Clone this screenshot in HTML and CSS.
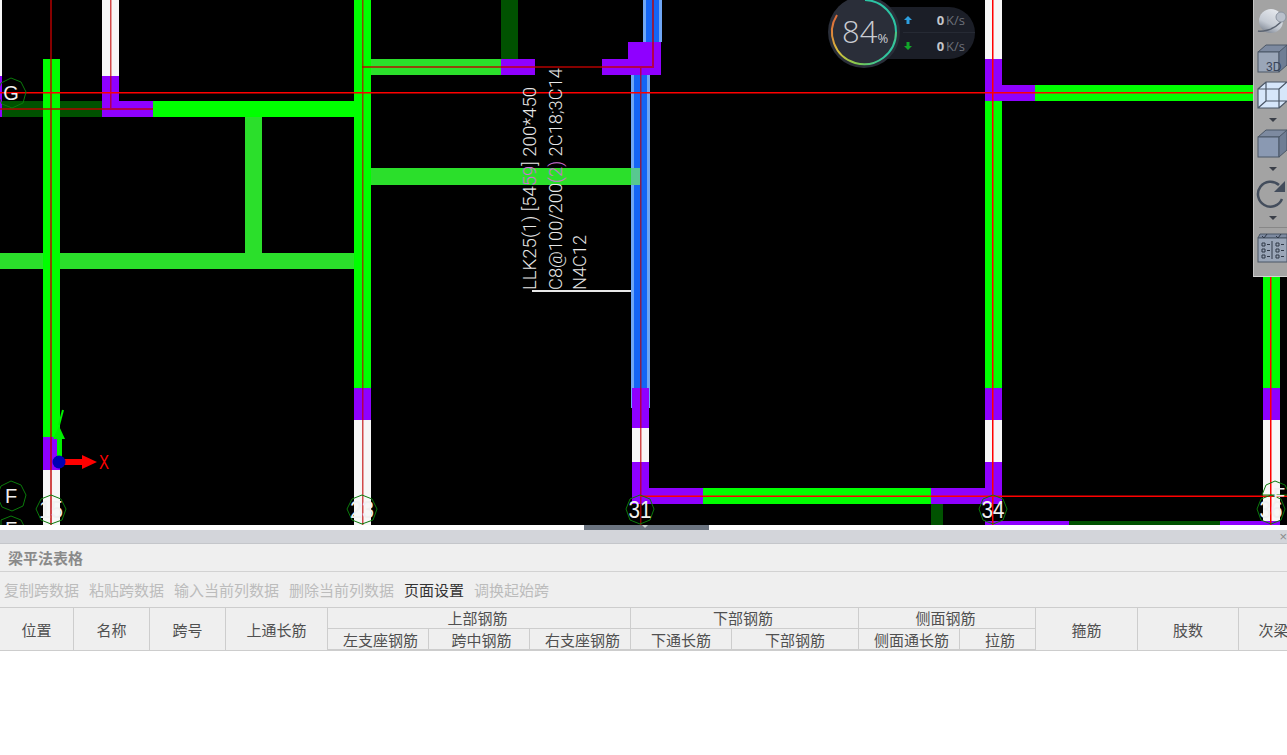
FILE: index.html
```html
<!DOCTYPE html>
<html lang="en">
<head>
  <meta charset="UTF-8">
  <title>梁平法表格</title>
  <link rel="stylesheet" href="styles.css">
</head>
<body>

  <div class="viewport">
    <!-- drawing area, everything inside is model coordinates -->
    <svg class="drawing" width="1287" height="525" viewBox="0 0 1287 525">
      <g class="white">
        <rect x="0" y="0" width="2" height="76"/>
        <rect x="102" y="0" width="17" height="76"/>
        <rect x="43" y="470" width="17" height="55"/>
        <rect x="354" y="420" width="17" height="105"/>
        <rect x="632" y="428" width="17" height="34"/>
        <rect x="985" y="0" width="17" height="59"/>
        <rect x="985" y="420" width="17" height="42"/>
        <rect x="1263" y="420" width="17" height="105"/>
      </g>
      <g class="dark-green">
        <rect x="2" y="101" width="100" height="16"/>
        <rect x="501" y="0" width="17" height="59"/>
        <rect x="931" y="504" width="12" height="21"/>
        <rect x="1069" y="521" width="151" height="4"/>
      </g>
      <g class="soft-green">
        <rect x="245" y="117" width="17" height="136"/>
        <rect x="0" y="253" width="354" height="16"/>
        <rect x="371" y="168" width="269" height="17"/>
        <rect x="364" y="59" width="137" height="16"/>
      </g>
      <g class="blue">
        <rect class="blue-edge" x="643" y="0" width="19" height="42"/>
        <rect x="646" y="0" width="13" height="42"/>
        <rect class="blue-edge" x="631" y="75" width="19" height="333"/>
        <rect x="634" y="75" width="13" height="333"/>
      </g>
      <rect class="beam-over-blue" x="631" y="168" width="9" height="17"/>
      <g class="green">
        <rect x="43" y="59" width="17" height="378"/>
        <rect x="153" y="101" width="201" height="16"/>
        <rect x="354" y="0" width="17" height="388"/>
        <rect x="703" y="488" width="228" height="16"/>
        <rect x="985" y="101" width="17" height="287"/>
        <rect x="1035" y="85" width="218" height="16"/>
        <rect x="1263" y="277" width="17" height="111"/>
      </g>
      <g class="purple">
        <rect x="0" y="76" width="2" height="41"/>
        <rect x="43" y="437" width="17" height="33"/>
        <rect x="102" y="76" width="17" height="41"/>
        <rect x="119" y="101" width="34" height="16"/>
        <rect x="354" y="388" width="17" height="32"/>
        <rect x="501" y="59" width="34" height="16"/>
        <rect x="602" y="59" width="59" height="16"/>
        <rect x="628" y="42" width="33" height="17"/>
        <rect x="632" y="388" width="17" height="40"/>
        <rect x="632" y="462" width="17" height="42"/>
        <rect x="649" y="488" width="54" height="16"/>
        <rect x="931" y="488" width="71" height="16"/>
        <rect x="985" y="59" width="17" height="42"/>
        <rect x="1002" y="85" width="33" height="16"/>
        <rect x="985" y="388" width="17" height="32"/>
        <rect x="985" y="462" width="17" height="42"/>
        <rect x="985" y="521" width="84" height="4"/>
        <rect x="1263" y="388" width="17" height="32"/>
        <rect x="1220" y="521" width="60" height="4"/>
      </g>

      <!-- axis lines -->
      <g class="axis-dim">
        <rect x="50" y="0" width="2" height="525"/>
        <rect x="0" y="108" width="153" height="2"/>
        <rect x="110" y="0" width="1.5" height="108"/>
        <rect x="362" y="66" width="292" height="2"/>
        <rect x="652" y="0" width="2" height="66"/>
        <rect x="640" y="68" width="1.5" height="457"/>
        <rect x="362" y="0" width="1.5" height="525"/>
      </g>
      <g class="axis">
        <rect x="0" y="92" width="1253" height="1.5"/>
        <rect x="640" y="495.500" width="647" height="1.5"/>
        <rect x="992" y="0" width="1.5" height="525"/>
        <rect x="1270" y="277" width="1.5" height="248"/>
      </g>

      <!-- axis bubbles -->
      <g class="bubble">
        <polygon points="11,78 21,82 26,92 23,103 12,108 2,104 -3,93 1,83"/>
        <polygon points="11,481 21,485 26,495 23,506 12,511 2,507 -3,496 1,486"/>
        <polygon points="11,516 21,520 26,530 1,530 1,520"/>
        <polygon points="51,495 61,499 66,509 62,520 51,524 41,520 36,509 41,499"/>
        <polygon points="362,495 372,499 377,509 373,520 362,524 352,520 347,509 352,499"/>
        <polygon points="640,495 650,499 654,509 650,520 640,524 630,520 626,509 630,499"/>
        <polygon points="993,495 1003,499 1007,509 1003,520 993,524 983,520 979,509 983,499"/>
        <polygon points="1271,495 1281,499 1285,509 1281,520 1271,524 1261,520 1257,509 1261,499"/>
        <polygon points="1275,481 1285,485 1290,495 1262,495 1266,485"/>
      </g>
      <g class="bubble-text">
        <text x="11" y="100">G</text>
        <text x="11" y="503">F</text>
        <text x="11" y="536">F</text>
        <text class="num" x="51" y="518" textLength="24" lengthAdjust="spacingAndGlyphs">15</text>
        <text class="num" x="362" y="518" textLength="24" lengthAdjust="spacingAndGlyphs">23</text>
        <text class="num" x="640" y="518" textLength="23" lengthAdjust="spacingAndGlyphs">31</text>
        <text class="num" x="993" y="518" textLength="23" lengthAdjust="spacingAndGlyphs">34</text>
        <text class="num" x="1271" y="518" textLength="23" lengthAdjust="spacingAndGlyphs">36</text>
        <text x="1279" y="502">F</text>
      </g>

      <!-- beam annotation -->
      <rect class="leader" x="532" y="290" width="99" height="2"/>
      <g class="note">
        <text transform="translate(536 290) rotate(-90)" textLength="203" lengthAdjust="spacingAndGlyphs">LLK25(1) [54<tspan class="note-xor">59</tspan>] 200*450</text>
        <text transform="translate(562 290) rotate(-90)" textLength="222" lengthAdjust="spacingAndGlyphs">C8@100/200<tspan class="note-xor">(2)</tspan> 2C18;3C14</text>
        <text transform="translate(586 290) rotate(-90)" textLength="55" lengthAdjust="spacingAndGlyphs">N4C12</text>
      </g>

      <!-- UCS icon -->
      <rect class="ucs-y" x="57" y="438" width="5" height="24"/>
      <path class="ucs-y" d="M59 426l6 13h-12z"/>
      <path class="ucs-y-letter" d="M63 410l-4 15"/>
      <rect class="ucs-x" x="64" y="459" width="19" height="6"/>
      <path class="ucs-x" d="M97 462l-15-7v14z"/>
      <circle class="ucs-dot" cx="59" cy="462" r="6.5"/>
      <text class="ucs-letter" x="99" y="469" textLength="10" lengthAdjust="spacingAndGlyphs">X</text>
    </svg>

    <!-- network speed widget -->
    <div class="speed">
      <div class="speed-pill">
        <div class="speed-row">
          <svg class="speed-arrow" width="10" height="10" viewBox="0 0 10 10"><path class="up" d="M5 1l4 4H6.500v4h-3V5H1z"/></svg>
          <b>0</b><span>K/s</span>
        </div>
        <div class="speed-row">
          <svg class="speed-arrow" width="10" height="10" viewBox="0 0 10 10"><path class="down" d="M5 9l4-4H6.500V1h-3v4H1z"/></svg>
          <b>0</b><span>K/s</span>
        </div>
      </div>
      <div class="speed-dial">
        <svg width="74" height="74" viewBox="0 0 74 74">
          <defs>
            <linearGradient id="ring" x1="0" y1="0" x2="1" y2="0.6">
              <stop offset="0" stop-color="#e0603a"/>
              <stop offset="0.4" stop-color="#d8c23c"/>
              <stop offset="0.75" stop-color="#7cc850"/>
              <stop offset="1" stop-color="#2cc4a4"/>
            </linearGradient>
          </defs>
          <circle cx="37" cy="37" r="36" fill="#2a2e39"/>
          <path class="ring-a" d="M10 20A32 32 0 1 0 69 37"/>
          <path class="ring-b" d="M69 37A32 32 0 0 0 38 5"/>
        </svg>
        <div class="speed-value">84<small>%</small></div>
      </div>
    </div>

    <!-- view toolbar -->
    <div class="view-bar">
      <svg width="34" height="277" viewBox="0 0 34 277">
        <defs>
          <linearGradient id="ball" x1="0.7" y1="0" x2="0.2" y2="1">
            <stop offset="0" stop-color="#e6e9ee"/>
            <stop offset="0.6" stop-color="#c4cad3"/>
            <stop offset="1" stop-color="#79818e"/>
          </linearGradient>
        </defs>
        <!-- orbit -->
        <circle cx="18" cy="21" r="12" fill="url(#ball)"/>
        <path class="i-orbit" d="M5 31q3 1 10-1t13-8"/>
        <circle class="i-ball" cx="28" cy="17" r="5"/>
        <!-- 3D box -->
        <path class="i-top" d="M5 52l8-7h21v7z"/>
        <rect class="i-face" x="5" y="52" width="21" height="20"/>
        <path class="i-side" d="M26 52l8-7v20l-8 7z"/>
        <text class="i-3d" x="13" y="71">3D</text>
        <!-- wire box -->
        <path class="i-glass" d="M5 89l8-7h21v19l-8 7H5z"/>
        <path class="i-line" d="M5 89h21v19H5zM5 89l8-7h21M26 89l8-7M13 82v19h21M13 101l-8 7M26 108l8-7"/>
        <path class="i-caret" d="M16 118h8l-4 4z"/>
        <!-- solid box -->
        <path class="i-top" d="M5 137l8-7h21v7z"/>
        <rect class="i-face2" x="5" y="137" width="21" height="20"/>
        <path class="i-side" d="M26 137l8-7v20l-8 7z"/>
        <path class="i-caret" d="M16 167h8l-4 4z"/>
        <!-- rotate -->
        <path class="i-rotate" d="M29 199A12.500 12.500 0 1 1 26 185"/>
        <path class="i-rotate-head" d="M32 181v11h-11z"/>
        <path class="i-caret" d="M16 216h8l-4 4z"/>
        <rect class="i-rule" x="6" y="227" width="28" height="1"/>
        <!-- checklist -->
        <path class="i-top" d="M5 238l2-4h27v4z"/>
        <rect class="i-face" x="5" y="238" width="29" height="24"/>
        <path class="i-list" d="M9 236l2 2 3-4M23 236l2 2 3-4M9 243h3v3H9zM9 249h3v3H9zM9 255h3v3H9zM14 244.500h3M14 250.500h3M14 256.500h3M19 241v18M23 243h3v3h-3zM23 249h3v3h-3zM23 255h3v3h-3zM28 244.500h3M28 250.500h3M28 256.500h3"/>
      </svg>
    </div>

    <div class="scroll-strip">
      <div class="scroll-thumb"></div>
    </div>
  </div>

  <div class="panel">
    <div class="panel-grip"><span class="panel-close">×</span></div>
    <div class="panel-title">梁平法表格</div>
    <div class="panel-tools">
      <span>复制跨数据</span>
      <span>粘贴跨数据</span>
      <span>输入当前列数据</span>
      <span>删除当前列数据</span>
      <span class="on">页面设置</span>
      <span>调换起始跨</span>
    </div>
    <div class="table-wrap">
      <div class="beam-table">
        <div class="cell tall">位置</div>
        <div class="cell tall">名称</div>
        <div class="cell tall">跨号</div>
        <div class="cell tall">上通长筋</div>
        <div class="cell group span3">上部钢筋</div>
        <div class="cell group span2">下部钢筋</div>
        <div class="cell group span2">侧面钢筋</div>
        <div class="cell tall">箍筋</div>
        <div class="cell tall">肢数</div>
        <div class="cell tall">次梁加筋</div>
        <div class="cell sub">左支座钢筋</div>
        <div class="cell sub">跨中钢筋</div>
        <div class="cell sub">右支座钢筋</div>
        <div class="cell">下通长筋</div>
        <div class="cell">下部钢筋</div>
        <div class="cell sub">侧面通长筋</div>
        <div class="cell sub">拉筋</div>
      </div>
    </div>
  </div>

</body>
</html>
```
FILE: styles.css
```css
* {
  box-sizing: border-box;
}

html, body {
  margin: 0;
  height: 755px;
  overflow: hidden;
  background: #ffffff;
  font-family: "Noto Sans CJK SC", "Noto Sans", sans-serif;
}

.viewport {
  position: relative;
  height: 530px;
  background: #000000;
}

.drawing {
  display: block;
}

.white rect { fill: #f7f7f7; }
.dark-green rect { fill: #005200; }
.soft-green rect { fill: #2bdf2b; }
.green rect { fill: #00ff00; }
.purple rect { fill: #8f00ff; }
.blue-edge { fill: #6ea6f5; }
.blue rect:not(.blue-edge) { fill: #1465f5; }
.beam-over-blue { fill: #58c890; }

.axis rect {
  fill: #ff0000;
}

.axis-dim rect {
  fill: #c00000;
  fill-opacity: 0.7;
}

.bubble polygon {
  fill: none;
  stroke: #0a7a0a;
  stroke-width: 1;
}

.bubble-text text {
  fill: #f0f0f0;
  font-family: "Liberation Sans", sans-serif;
  font-size: 20px;
  text-anchor: middle;
}

.bubble-text text.num {
  font-size: 24px;
}

.leader {
  fill: #e8e8e8;
}

.note text {
  fill: #e8e8e8;
  font-family: Roboto, "Liberation Sans", sans-serif;
  font-size: 18px;
  font-weight: 300;
}

.note-xor {
  fill: #d070d8;
}

.ucs-y {
  fill: #00f000;
}

.ucs-y-letter {
  stroke: #00f000;
  stroke-width: 2;
  fill: none;
}

.ucs-x { fill: #ff0000; }
.ucs-dot { fill: #0000b4; }

.ucs-letter {
  fill: #ff0000;
  font-family: "Liberation Sans", sans-serif;
  font-size: 20px;
}

/* speed widget */
.speed {
  position: absolute;
  left: 827px;
  top: -5px;
  width: 150px;
  height: 75px;
}

.speed-dial {
  position: absolute;
  left: 0;
  top: 0;
  width: 74px;
  height: 74px;
}

.speed-dial svg {
  display: block;
}

.ring-a, .ring-b {
  fill: none;
  stroke-width: 2;
}

.ring-a { stroke: url(#ring); }
.ring-b { stroke: #2cc4a4; }

.speed-value {
  position: absolute;
  left: 15px;
  top: 14px;
  color: #c9ccd2;
  font-family: "Open Sans", sans-serif;
  font-size: 31px;
  font-weight: 300;
  line-height: 44px;
  white-space: nowrap;
}

.speed-value small {
  font-size: 13px;
  font-weight: 400;
}

.speed-pill {
  position: absolute;
  left: 50px;
  top: 12px;
  width: 98px;
  height: 52px;
  padding-left: 26px;
  background: #1b1e27;
  border-radius: 0 26px 26px 0;
}

.speed-row {
  display: flex;
  align-items: center;
  height: 26px;
  color: #6d717a;
  font-family: "Open Sans", sans-serif;
  font-size: 13px;
}

.speed-row:first-child {
  border-bottom: 1px solid #262a34;
}

.speed-row b {
  margin-left: auto;
  color: #c4c6cb;
}

.speed-row span {
  margin: 0 10px 0 2px;
}

.up { fill: #2d9fe0; }
.down { fill: #12a52a; }

/* view toolbar */
.view-bar {
  position: absolute;
  right: 0;
  top: 0;
  width: 34px;
  height: 277px;
  background: #a3a3a3;
  border-left: 1px solid #c4c4c4;
  border-bottom: 1px solid #d4d4d4;
}

.view-bar svg {
  display: block;
  margin-left: -1px;
}

.i-ball {
  fill: #b9c0cb;
  stroke: #8b93a0;
  stroke-width: 1;
}

.i-orbit {
  fill: none;
  stroke: #5a6371;
  stroke-width: 1.5;
}

.i-line {
  fill: none;
  stroke: #4a5666;
  stroke-width: 1.2;
}

.i-top { fill: #7d8aa0; stroke: #4a5666; }
.i-face { fill: #9aa6b8; stroke: #4a5666; }
.i-face2 { fill: #8a99b2; stroke: #4a5666; }
.i-side { fill: #6f7d94; stroke: #4a5666; }
.i-glass { fill: #d6e6fa; }
.i-caret { fill: #3a3f48; }

.i-3d {
  fill: #39455a;
  font-family: "Liberation Sans", sans-serif;
  font-size: 12px;
}

.i-rotate {
  fill: none;
  stroke: #434d5c;
  stroke-width: 2.5;
}

.i-rotate-head { fill: #434d5c; }
.i-rule { fill: #878787; }

.i-list {
  fill: none;
  stroke: #2f3847;
  stroke-width: 1;
}

/* thin strip under the drawing */
.scroll-strip {
  position: absolute;
  left: 0;
  right: 0;
  top: 525px;
  height: 5px;
  background: #ffffff;
}

.scroll-thumb {
  position: absolute;
  left: 584px;
  top: 0;
  width: 125px;
  height: 5px;
  background: #6b7480;
}

.scroll-thumb::after {
  content: "";
  position: absolute;
  left: 58px;
  top: 0;
  border: 3px solid transparent;
  border-top-color: #c8ccd0;
}

/* bottom panel */
.panel-grip {
  position: relative;
  height: 14px;
  background: #d3d5da;
  border-bottom: 1px solid #c4c6ca;
}

.panel-close {
  position: absolute;
  right: 0;
  top: 0;
  color: #8a8a8a;
  font-family: "Liberation Sans", sans-serif;
  font-size: 13px;
  line-height: 14px;
}

.panel-title {
  height: 28px;
  padding-left: 8px;
  background: #efefef;
  border-bottom: 1px solid #d2d2d2;
  color: #8a8a8a;
  font-size: 15px;
  font-weight: 700;
  line-height: 27px;
}

.panel-tools {
  display: flex;
  gap: 10px;
  height: 35px;
  padding-left: 4px;
  background: #efefef;
  color: #bcbcbc;
  font-size: 15px;
  line-height: 36px;
}

.panel-tools .on {
  color: #333333;
}

.table-wrap {
  overflow: hidden;
}

.beam-table {
  display: grid;
  grid-template-columns: 74px 76px 76px 102px 101px 101px 101px 101px 127px 101px 76px 102px 101px 100px;
  grid-template-rows: 21px 21px;
  width: 1338px;
  background: #efefef;
  border-top: 1px solid #cdcdcd;
  border-bottom: 1px solid #cdcdcd;
  color: #505050;
  font-size: 15px;
}

.cell {
  display: flex;
  align-items: center;
  justify-content: center;
  border-right: 1px solid #cdcdcd;
  border-bottom: 1px solid #cdcdcd;
  line-height: 1;
}

.tall {
  grid-row: span 2;
  border-bottom: 0;
}

.group {
  padding: 0 3px 2px 0;
}

.sub {
  padding-left: 5px;
}

.span3 { grid-column: span 3; }
.span2 { grid-column: span 2; }
```
